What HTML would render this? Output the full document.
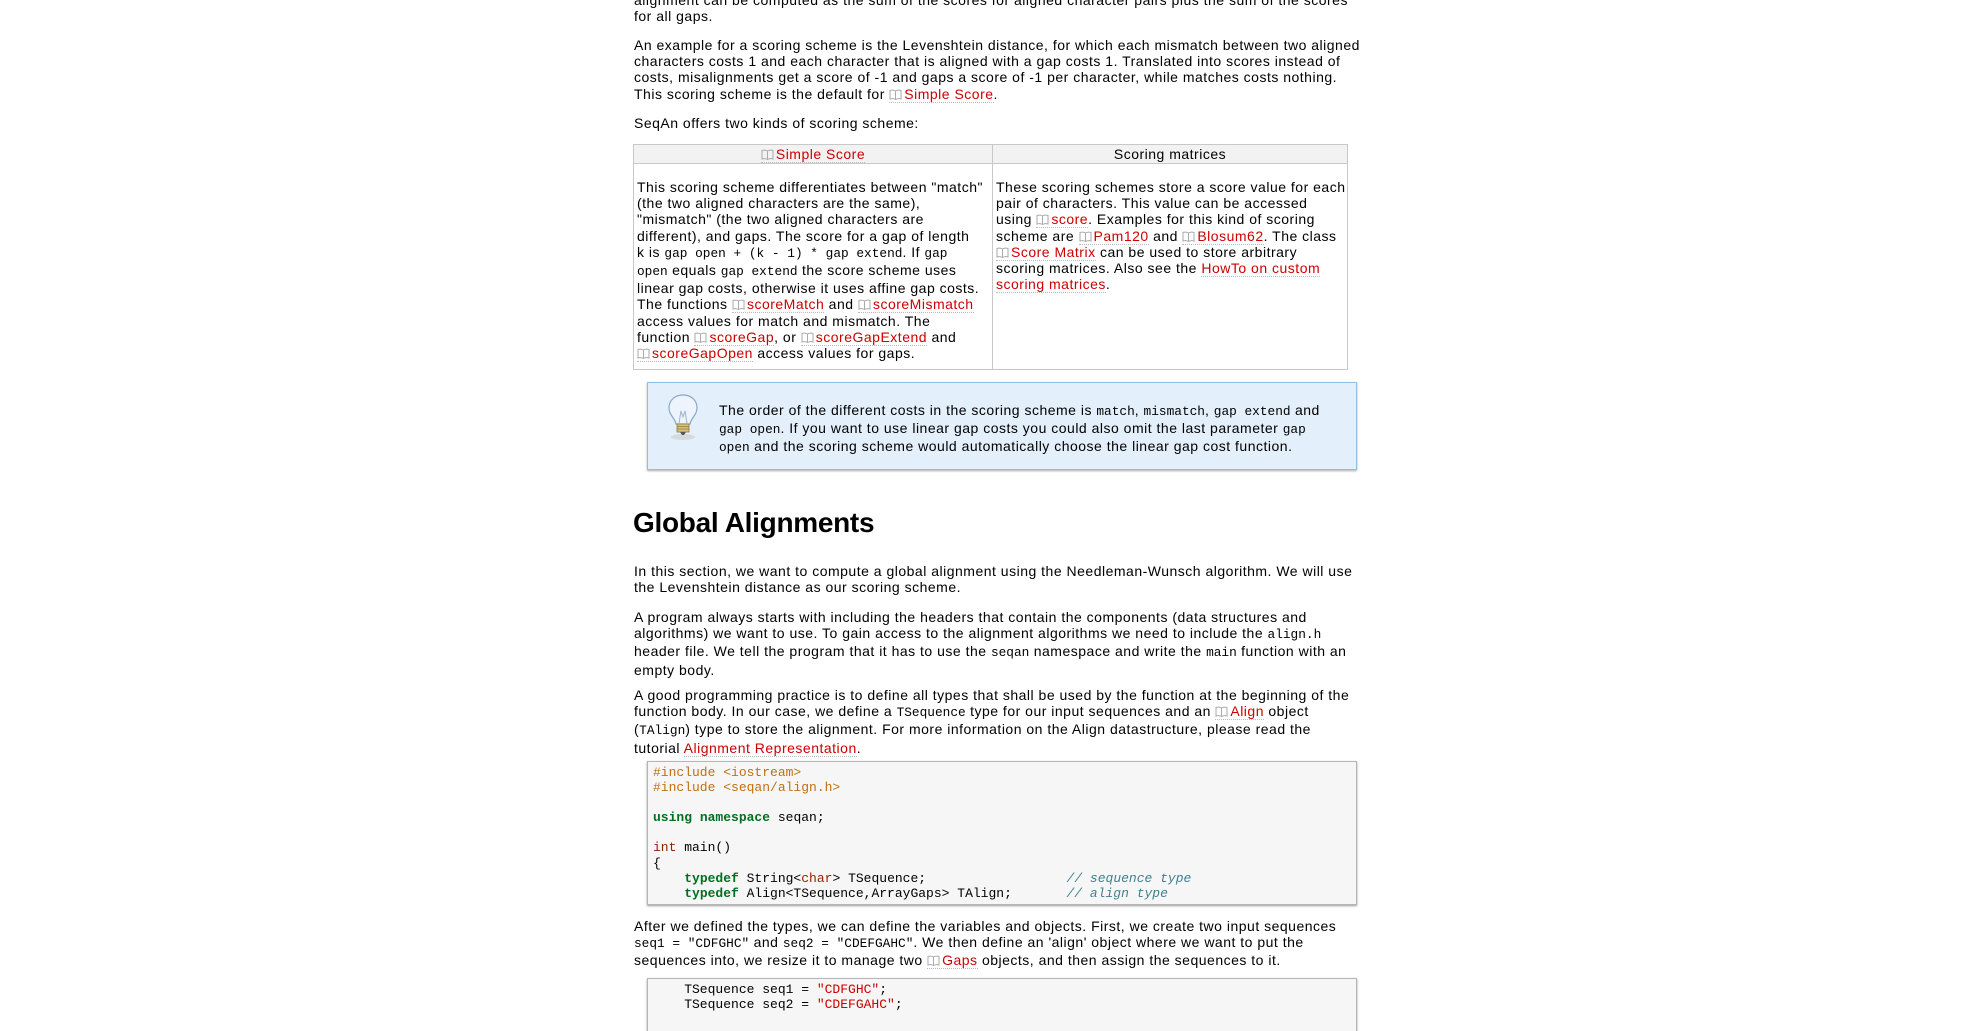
<!DOCTYPE html>
<html><head><meta charset="utf-8">
<style>
html,body{margin:0;padding:0;background:#fff;width:1986px;height:1031px;overflow:hidden;}
body{font-family:"Liberation Sans",sans-serif;font-size:14px;letter-spacing:0.5px;color:#000;position:relative;}
.b{position:absolute;left:634px;line-height:16.2px;white-space:nowrap;}
a{color:#c00;text-decoration:none;border-bottom:1px dotted #bbb;}
code,.m{font-family:"Liberation Mono",monospace;font-size:12.8px;letter-spacing:0;}
.bk{display:inline-block;width:13px;height:11px;vertical-align:-1px;margin-right:2px;}
table{position:absolute;left:633px;top:144px;width:715px;height:226px;border-collapse:collapse;table-layout:fixed;}
td,th{border:1px solid #c8c8c8;vertical-align:top;line-height:16.2px;white-space:nowrap;padding:0 3px;overflow:hidden;}
th{font-weight:normal;background:#f2f2f2;height:18px;line-height:18px;text-align:center;}
.note{position:absolute;left:647px;top:382px;width:708px;height:86px;background:#e3effa;border:1px solid #95bfe0;box-shadow:0 1px 2px #aaa;}
.code{position:absolute;left:647px;width:708px;background:#f6f6f6;border:1px solid #b5b5b5;box-shadow:0 1px 2px #999;font-family:"Liberation Mono",monospace;font-size:13px;letter-spacing:0;line-height:15.1px;white-space:pre;}
.pp{color:#c07010}.kw{color:#007020;font-weight:bold}.ty{color:#902000}.cm{color:#408090;font-style:italic}.st{color:#c00}
h1{position:absolute;left:633px;top:507px;margin:0;font-size:28px;font-weight:bold;letter-spacing:-0.3px;}
</style></head><body>
<svg width="0" height="0" style="position:absolute"><defs><symbol id="bk" viewBox="0 0 13 11"><path d="M6.5 2 C5 1 2.5 0.8 1 1.5 V10 C2.5 9.3 5 9.5 6.5 10.5 C8 9.5 10.5 9.3 12 10 V1.5 C10.5 0.8 8 1 6.5 2 Z M6.5 2 V10.5" fill="none" stroke="#aaa" stroke-width="1"/></symbol></defs></svg>

<div class="b" style="top:-8px">alignment can be computed as the sum of the scores for aligned character pairs plus the sum of the scores<br>for all gaps.</div>

<div class="b" style="top:37px">An example for a scoring scheme is the Levenshtein distance, for which each mismatch between two aligned<br>characters costs 1 and each character that is aligned with a gap costs 1. Translated into scores instead of<br>costs, misalignments get a score of -1 and gaps a score of -1 per character, while matches costs nothing.<br>This scoring scheme is the default for <a><svg class="bk"><use href="#bk"/></svg>Simple Score</a>.</div>

<div class="b" style="top:115px">SeqAn offers two kinds of scoring scheme:</div>

<table>
<tr><th style="width:352px"><a><svg class="bk"><use href="#bk"/></svg>Simple Score</a></th><th>Scoring matrices</th></tr>
<tr><td style="padding-top:15px">This scoring scheme differentiates between "match"<br>(the two aligned characters are the same),<br>"mismatch" (the two aligned characters are<br>different), and gaps. The score for a gap of length<br>k is <span class="m">gap open + (k - 1) * gap extend</span>. If <span class="m">gap</span><br><span class="m">open</span> equals <span class="m">gap extend</span> the score scheme uses<br>linear gap costs, otherwise it uses affine gap costs.<br>The functions <a><svg class="bk"><use href="#bk"/></svg>scoreMatch</a> and <a><svg class="bk"><use href="#bk"/></svg>scoreMismatch</a><br>access values for match and mismatch. The<br>function <a><svg class="bk"><use href="#bk"/></svg>scoreGap</a>, or <a><svg class="bk"><use href="#bk"/></svg>scoreGapExtend</a> and<br><a><svg class="bk"><use href="#bk"/></svg>scoreGapOpen</a> access values for gaps.</td>
<td style="padding-top:15px">These scoring schemes store a score value for each<br>pair of characters. This value can be accessed<br>using <a><svg class="bk"><use href="#bk"/></svg>score</a>. Examples for this kind of scoring<br>scheme are <a><svg class="bk"><use href="#bk"/></svg>Pam120</a> and <a><svg class="bk"><use href="#bk"/></svg>Blosum62</a>. The class<br><a><svg class="bk"><use href="#bk"/></svg>Score Matrix</a> can be used to store arbitrary<br>scoring matrices. Also see the <a>HowTo on custom</a><br><a>scoring matrices</a>.</td></tr>
</table>

<div class="note">
<svg style="position:absolute;left:18px;top:10px" width="34" height="48" viewBox="0 0 34 48">
<ellipse cx="17" cy="44" rx="12" ry="3" fill="#ccc" opacity=".6"/>
<path d="M17 2 C8 2 3 8 3 15 C3 22 9 25 10 31 H24 C25 25 31 22 31 15 C31 8 26 2 17 2 Z" fill="#eef4fb" stroke="#8aa6c8" stroke-width="1.2"/>
<path d="M13 30 L15 18 L17 24 L19 18 L21 30" fill="none" stroke="#9fb4cc" stroke-width="1"/>
<rect x="11" y="31" width="12" height="8" fill="#d8c27a" stroke="#8a7a40" stroke-width=".8"/>
<path d="M11 33.5 H23 M11 36 H23" stroke="#8a7a40" stroke-width=".7"/>
<path d="M14 39 H20 L18 42 H16 Z" fill="#555"/>
</svg>
<div class="b" style="left:71px;top:19px">The order of the different costs in the scoring scheme is <span class="m">match</span>, <span class="m">mismatch</span>, <span class="m">gap extend</span> and<br><span class="m">gap open</span>. If you want to use linear gap costs you could also omit the last parameter <span class="m">gap</span><br><span class="m">open</span> and the scoring scheme would automatically choose the linear gap cost function.</div>
</div>

<h1>Global Alignments</h1>

<div class="b" style="top:563px">In this section, we want to compute a global alignment using the Needleman-Wunsch algorithm. We will use<br>the Levenshtein distance as our scoring scheme.</div>

<div class="b" style="top:609px">A program always starts with including the headers that contain the components (data structures and<br>algorithms) we want to use. To gain access to the alignment algorithms we need to include the <span class="m">align.h</span><br>header file. We tell the program that it has to use the <span class="m">seqan</span> namespace and write the <span class="m">main</span> function with an<br>empty body.</div>

<div class="b" style="top:687px">A good programming practice is to define all types that shall be used by the function at the beginning of the<br>function body. In our case, we define a <span class="m">TSequence</span> type for our input sequences and an <a><svg class="bk"><use href="#bk"/></svg>Align</a> object<br>(<span class="m">TAlign</span>) type to store the alignment. For more information on the Align datastructure, please read the<br>tutorial <a>Alignment Representation</a>.</div>

<div class="code" style="top:761px;height:142px;"><div style="padding:3px 5px"><span class="pp">#include &lt;iostream&gt;</span>
<span class="pp">#include &lt;seqan/align.h&gt;</span>

<span class="kw">using</span> <span class="kw">namespace</span> seqan;

<span class="ty">int</span> main()
{
    <span class="kw">typedef</span> String&lt;<span class="ty">char</span>&gt; TSequence;                  <span class="cm">// sequence type</span>
    <span class="kw">typedef</span> Align&lt;TSequence,ArrayGaps&gt; TAlign;       <span class="cm">// align type</span></div></div>

<div class="b" style="top:918px">After we defined the types, we can define the variables and objects. First, we create two input sequences<br><span class="m">seq1 = "CDFGHC"</span> and <span class="m">seq2 = "CDEFGAHC"</span>. We then define an 'align' object where we want to put the<br>sequences into, we resize it to manage two <a><svg class="bk"><use href="#bk"/></svg>Gaps</a> objects, and then assign the sequences to it.</div>

<div class="code" style="top:978px;height:60px;"><div style="padding:3px 5px">    TSequence seq1 = <span class="st">"CDFGHC"</span>;
    TSequence seq2 = <span class="st">"CDEFGAHC"</span>;</div></div>
</body></html>
